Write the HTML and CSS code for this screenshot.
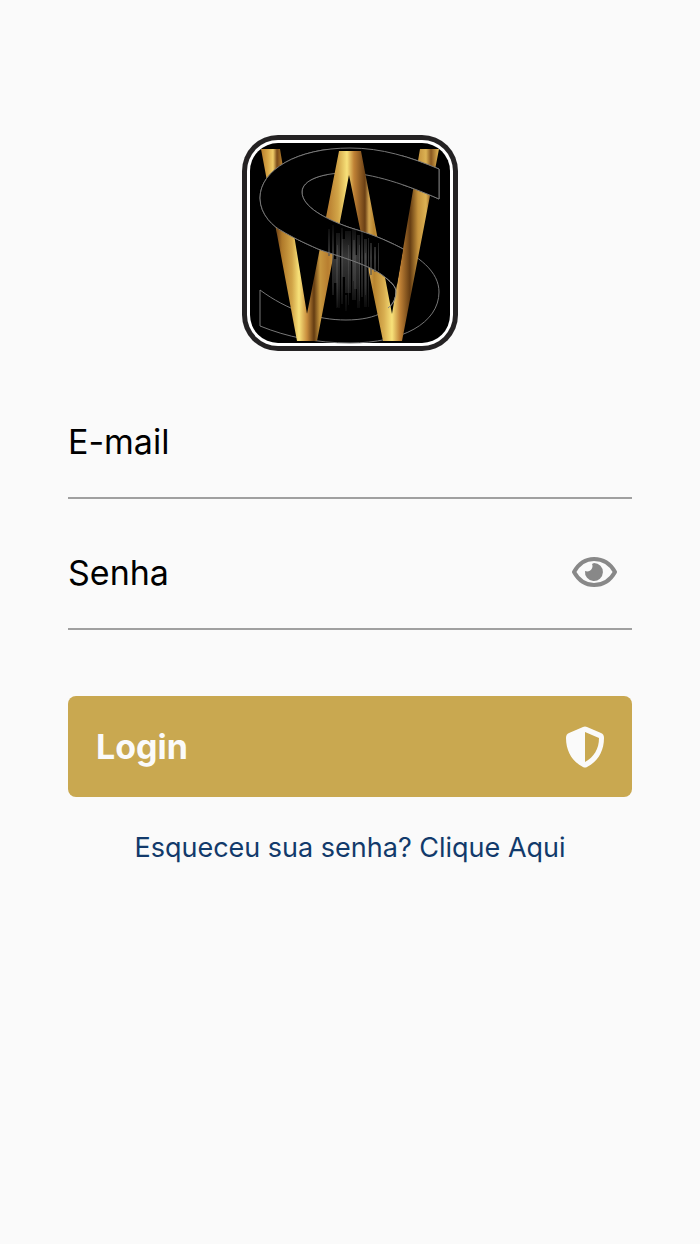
FILE: index.html
```html
<!DOCTYPE html>
<html lang="pt-BR">

<head>
  <meta charset="UTF-8">
  <meta name="viewport" content="width=device-width, initial-scale=1.0">
  <title>Login</title>
  <link rel="stylesheet" href="styles.css">
</head>

<body>
  <main class="container">
    <svg class="logo" viewBox="0 0 216 216" role="img" aria-label="WS">
      <defs>
        <linearGradient id="gold" gradientUnits="userSpaceOnUse" x1="0" y1="0" x2="200" y2="0">
          <stop offset="0.095" stop-color="#b87e2c" />
          <stop offset="0.13" stop-color="#d8a848" />
          <stop offset="0.155" stop-color="#f0cc68" />
          <stop offset="0.175" stop-color="#7a4a18" />
          <stop offset="0.2" stop-color="#b07a2a" />
          <stop offset="0.25" stop-color="#d2a548" />
          <stop offset="0.285" stop-color="#f8e27a" />
          <stop offset="0.325" stop-color="#c88c3c" />
          <stop offset="0.36" stop-color="#643c12" />
          <stop offset="0.39" stop-color="#c8983f" />
          <stop offset="0.43" stop-color="#b87e30" />
          <stop offset="0.48" stop-color="#d2a548" />
          <stop offset="0.525" stop-color="#f8e27a" />
          <stop offset="0.56" stop-color="#c08236" />
          <stop offset="0.615" stop-color="#6b4015" />
          <stop offset="0.635" stop-color="#d2a550" />
          <stop offset="0.66" stop-color="#b8842f" />
          <stop offset="0.71" stop-color="#d8ae50" />
          <stop offset="0.75" stop-color="#f8e27a" />
          <stop offset="0.79" stop-color="#c08236" />
          <stop offset="0.84" stop-color="#643c12" />
          <stop offset="0.88" stop-color="#c4923c" />
          <stop offset="0.92" stop-color="#dcb254" />
          <stop offset="0.945" stop-color="#8a5820" />
          <stop offset="0.98" stop-color="#dcb050" />
        </linearGradient>
        <linearGradient id="brush" gradientUnits="userSpaceOnUse" x1="0" y1="84" x2="0" y2="180">
          <stop offset="0" stop-color="#555" stop-opacity="0" />
          <stop offset="0.4" stop-color="#555" stop-opacity="0.65" />
          <stop offset="0.7" stop-color="#444" stop-opacity="0.5" />
          <stop offset="1" stop-color="#333" stop-opacity="0.1" />
        </linearGradient>
        <path id="letter-s" d="M197 34C168 22 140 13 108 13C55 13 18 35 18 63C18 80 32 92 40 96C50 102 60 107 76 114C95 121 130 130 144 143C150 148 154 152 154 157C154 174 135 185 104 185C75 185 45 175 18 155V191C45 202 75 208 108 208C160 208 197 188 197 157C197 137 178 121 147 107C130 99 115 95 106 92C84 84 60 72 60 57C60 45 80 38 104 38C130 38 165 50 197 64Z" />
        <clipPath id="front">
          <path d="M0 0H85V75L166 85L155 150H0ZM160 20H216V70H160Z" />
        </clipPath>
      </defs>
      <rect width="216" height="216" rx="36" fill="#242223" />
      <rect x="5" y="5" width="206" height="206" rx="31" fill="#fff" />
      <rect x="8" y="8" width="200" height="200" rx="28" fill="#000" />
      <use href="#letter-s" fill="none" stroke="#777" />
      <path fill="url(#gold)" d="M19 14H38L65 179L97 16H119L150 179L178 14H197L160 206H141L107 40L75 206H55Z" />
      <g clip-path="url(#front)">
        <use href="#letter-s" fill="#000" />
      </g>
      <g fill="url(#brush)">
        <path d="M86 94h2v27h-2zM90 90h2v70h-2zM94 98h4v75h-4zM99 93h2v76h-2zM103 96h6v62h-6zM103 160h2v16h-2zM110 94h4v71h-4zM115 100h3v73h-3zM119 97h2v65h-2zM122 104h3v68h-3zM126 103h1v69h-1zM128 108h2v32h-2zM132 112h2v25h-2zM136 108h1v28h-1z" />
        <path d="M95 110h1v62h-1zM100 104h3v38h-3zM106 110h1v60h-1zM111 105h2v41h-2zM112 120h3v34h-3zM117 110h1v56h-1zM123 118h1v42h-1zM92 124h3v24h-3z" />
      </g>
      <g clip-path="url(#front)">
        <use href="#letter-s" fill="none" stroke="#777" />
      </g>
      <path d="M144 143C150 148 154 152 154 157C154 163 151 169 146 173" fill="none" stroke="#858585" />
    </svg>

    <form class="form">
      <div class="field">
        <input class="field__input" type="email" placeholder="E-mail" aria-label="E-mail">
      </div>
      <div class="field">
        <input class="field__input" type="password" placeholder="Senha" aria-label="Senha">
        <button class="field__toggle" type="button" aria-label="Mostrar senha">
          <svg class="icon-eye" viewBox="0 0 46 32">
            <path fill="none" stroke="#888" stroke-width="4" stroke-linejoin="round" d="M3 16C8 7 15 3 23 3S39 7 44 16C39 25 31 29 23 29S8 25 3 16Z" />
            <path fill="#888" d="M23 7A9 9 0 1 1 14 15C19 17 23 12 21 8Z" />
          </svg>
        </button>
      </div>
      <button class="btn-login" type="submit">
        <span>Login</span>
        <svg class="icon-shield" viewBox="0 0 39 42">
          <path fill="#fafafa" fill-rule="evenodd" d="M18 1Q20 0 22 1L36 7Q39 8 39 12C39 26 32 36 22 41Q20 42 18 41C8 36 1 26 1 12Q1 8 4 7ZM20 6V36C29 31 34 23 34 12Z" />
        </svg>
      </button>
    </form>

    <a class="forgot" href="#">Esqueceu sua senha? Clique Aqui</a>
  </main>
</body>

</html>
```
FILE: styles.css
```css
* {
  box-sizing: border-box;
}

body {
  margin: 0;
  background-color: #fafafa;
  font-family: Inter, 'Liberation Sans', sans-serif;
}

.container {
  display: flex;
  flex-direction: column;
  align-items: center;
  padding: 135px 68px 32px;
}

.logo {
  width: 216px;
  height: 216px;
}

.form {
  display: flex;
  flex-direction: column;
  gap: 16px;
  width: 100%;
  margin-top: 33px;
}

.field {
  display: flex;
  align-items: center;
  height: 115px;
  border-bottom: 2px solid #a0a0a0;
}

.field__input {
  flex: 1;
  min-width: 0;
  height: 100%;
  padding: 2px 0 0;
  border: 0;
  outline: 0;
  background: transparent;
  color: #000;
  font-family: inherit;
  font-size: 34px;
}

.field__input::placeholder {
  color: #000;
  opacity: 1;
}

.field__toggle {
  display: flex;
  margin-right: 15px;
  padding: 0;
  border: 0;
  background: transparent;
  cursor: pointer;
}

.icon-eye {
  width: 46px;
  height: 32px;
}

.btn-login {
  display: flex;
  align-items: center;
  justify-content: space-between;
  height: 101px;
  margin-top: 50px;
  padding: 0 28px;
  border: 0;
  border-radius: 8px;
  background-color: #c9a850;
  color: #fafafa;
  font-family: inherit;
  font-size: 34px;
  font-weight: 700;
  cursor: pointer;
}

.btn-login:hover {
  background-color: #b89845;
}

.icon-shield {
  width: 39px;
  height: 42px;
}

.forgot {
  margin-top: 33px;
  color: #123a6b;
  font-size: 27px;
  line-height: 36px;
  text-decoration: none;
}
```
